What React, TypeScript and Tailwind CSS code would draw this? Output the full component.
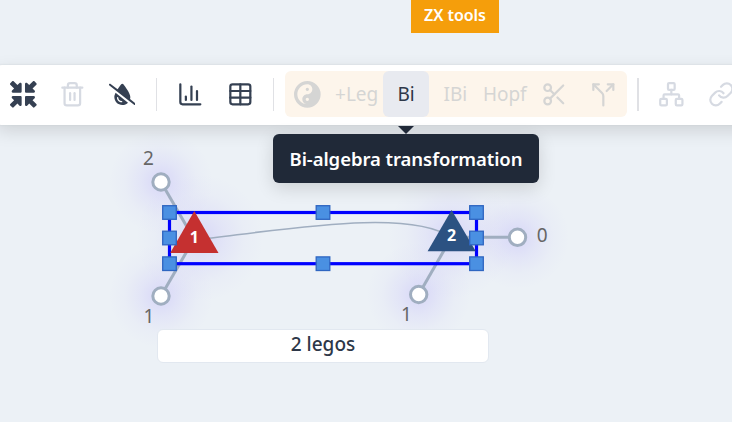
import type { ReactNode } from 'react';
import { ChartColumn, Link, Network, Scissors, Split, Table, Trash2 } from 'lucide-react';
import { FaDropletSlash, FaMinimize, FaYinYang } from 'react-icons/fa6';

function Tool({ children, off, active }: { children: ReactNode; off?: boolean; active?: boolean }) {
  return (
    <button
      className={`relative flex h-[46px] w-[45.4px] shrink-0 items-center justify-center rounded-md whitespace-nowrap ${
        off ? 'text-[#d6dae2]' : 'text-[#354052]'
      } ${active ? 'bg-[#e8eaf0]' : ''}`}
    >
      {children}
    </button>
  );
}

function Separator({ wide }: { wide?: boolean }) {
  return <div className={`h-[33px] shrink-0 bg-[#e0e1e5] ${wide ? 'w-0.5' : 'w-px'}`} />;
}

const legs = [
  { x: 161, y: 182, tx: 194, ty: 239, label: '2', lx: 148.5, ly: 165 },
  { x: 161, y: 296, tx: 194, ty: 239, label: '1', lx: 149, ly: 322.5 },
  { x: 418.7, y: 294.5, tx: 451.5, ty: 237.3, label: '1', lx: 406.5, ly: 321 },
  { x: 517.5, y: 237.3, tx: 451.5, ty: 237.3, label: '0', lx: 542.3, ly: 242 },
];

const handles = [
  [169.5, 212.5], [323, 212.5], [476.5, 212.5],
  [169.5, 238], [476.5, 238],
  [169.5, 263.7], [323, 263.7], [476.5, 263.7],
];

const glows = [
  [161, 182, 52], [161, 296, 52], [200, 238, 64],
  [418.7, 294.5, 52], [451.5, 235, 64], [517.5, 237.3, 52],
];

function Diagram() {
  return (
    <svg viewBox="0 0 732 422" className="absolute inset-0 h-full w-full">
      <defs>
        <radialGradient id="glow">
          <stop offset="0" stopColor="#7b61ff" stopOpacity=".18" />
          <stop offset=".4" stopColor="#7b61ff" stopOpacity=".08" />
          <stop offset=".7" stopColor="#7b61ff" stopOpacity=".025" />
          <stop offset="1" stopColor="#7b61ff" stopOpacity="0" />
        </radialGradient>
      </defs>
      {glows.map(([x, y, r], i) => <circle key={i} cx={x} cy={y} r={r} fill="url(#glow)" />)}
      {legs.map((l, i) => (
        <g key={i}>
          <line x1={l.x} y1={l.y} x2={l.tx} y2={l.ty} stroke="#a0aec0" strokeWidth="3" />
          <circle cx={l.x} cy={l.y} r="8.2" fill="#fff" stroke="#a0aec0" strokeWidth="3" />
          <text x={l.lx} y={l.ly} textAnchor="middle" fontSize="19" fill="#666">{l.label}</text>
        </g>
      ))}
      <path d="M194 240C290 229 410 208 452 238" fill="none" stroke="#a0aec0" strokeWidth="1.6" />
      <rect x="169.5" y="212.5" width="307" height="51.2" fill="none" stroke="#00f" strokeWidth="3.2" />
      <path d="M194.3 211L218.5 253H170.2Z" fill="#c53030" />
      <path d="M451.6 210L475.8 251.2H427.6Z" fill="#2c5282" />
      <g fill="#fff" fontSize="16" fontWeight="700" textAnchor="middle">
        <text x="194.3" y="243">1</text>
        <text x="451.6" y="241">2</text>
      </g>
      {handles.map(([x, y], i) => (
        <rect key={i} x={x - 6.8} y={y - 6.8} width="13.6" height="13.6" fill="#4a90e2" stroke="#2f66c1" strokeWidth="1.3" />
      ))}
    </svg>
  );
}

export default function App() {
  return (
    <main className="relative flex h-[422px] w-[732px] flex-col overflow-hidden bg-[#ecf1f6] font-['Noto_Sans','Open_Sans',sans-serif]">
      <Diagram />
      <header className="relative flex h-[65px] shrink-0 items-start pl-[411px]">
        <div className="flex h-[33px] w-[88px] items-center justify-center bg-[#f59e0b] pb-[3px] text-[16px] font-semibold tracking-[-0.05px] whitespace-nowrap text-white">
          ZX tools
        </div>
      </header>
      <nav className="relative -ml-[4px] flex h-[60px] w-[790px] shrink-0 items-center rounded-md bg-white pb-[1.5px] pl-[4.6px] text-[19px] shadow-[0_0_2px_#cbd0d5,0_6px_18px_rgba(0,0,0,0.13)]">
        <div className="flex gap-[4px]">
          <Tool><FaMinimize size={26.67} /></Tool>
          <Tool off><Trash2 size={26.67} /></Tool>
          <Tool><FaDropletSlash size={26.67} /></Tool>
        </div>
        <div className="flex w-[23px] justify-center"><Separator /></div>
        <div className="flex gap-[4px]">
          <Tool><ChartColumn size={26.67} /></Tool>
          <Tool><Table size={26.67} /></Tool>
        </div>
        <div className="flex w-[22px] justify-center"><Separator /></div>
        <div className="flex gap-[4px] rounded-md bg-[#fdf5eb] pr-[0.5px] [&_button]:text-[#d5d5d4]">
          <Tool><FaYinYang size={26.67} /></Tool>
          <Tool><span>+Leg</span></Tool>
          <Tool active><span className="text-[#2d3748]">Bi</span></Tool>
          <Tool>IBi</Tool>
          <Tool><span className="tracking-[-0.1px]">Hopf</span></Tool>
          <Tool><Scissors size={26.67} /></Tool>
          <Tool><Split size={26.67} /></Tool>
        </div>
        <div className="flex w-[22px] justify-center"><Separator wide /></div>
        <div className="flex gap-[4px]">
          <Tool off><Network size={26.67} /></Tool>
          <Tool off><Link size={26.67} /></Tool>
        </div>
      </nav>
      <div className="absolute top-[134px] left-[273px] flex h-[49px] w-[266px] items-center justify-center rounded-md bg-[#202938] text-[18.5px] font-semibold whitespace-nowrap text-white shadow-[0_5px_18px_rgba(0,0,0,0.14)]">
        <div className="absolute -top-2 left-[125px] border-x-8 border-t-8 border-x-transparent border-t-[#202938]" />
        <span className="tracking-[-0.06px]">Bi-algebra transformation</span>
      </div>
      <section className="relative mt-[204px] ml-[157px] flex h-[34px] w-[332px] items-center justify-center rounded-md border border-[#e2e8f0] bg-white pb-[3px] text-[19px] font-medium text-[#2d3748]">
        2 legos
      </section>
    </main>
  );
}
